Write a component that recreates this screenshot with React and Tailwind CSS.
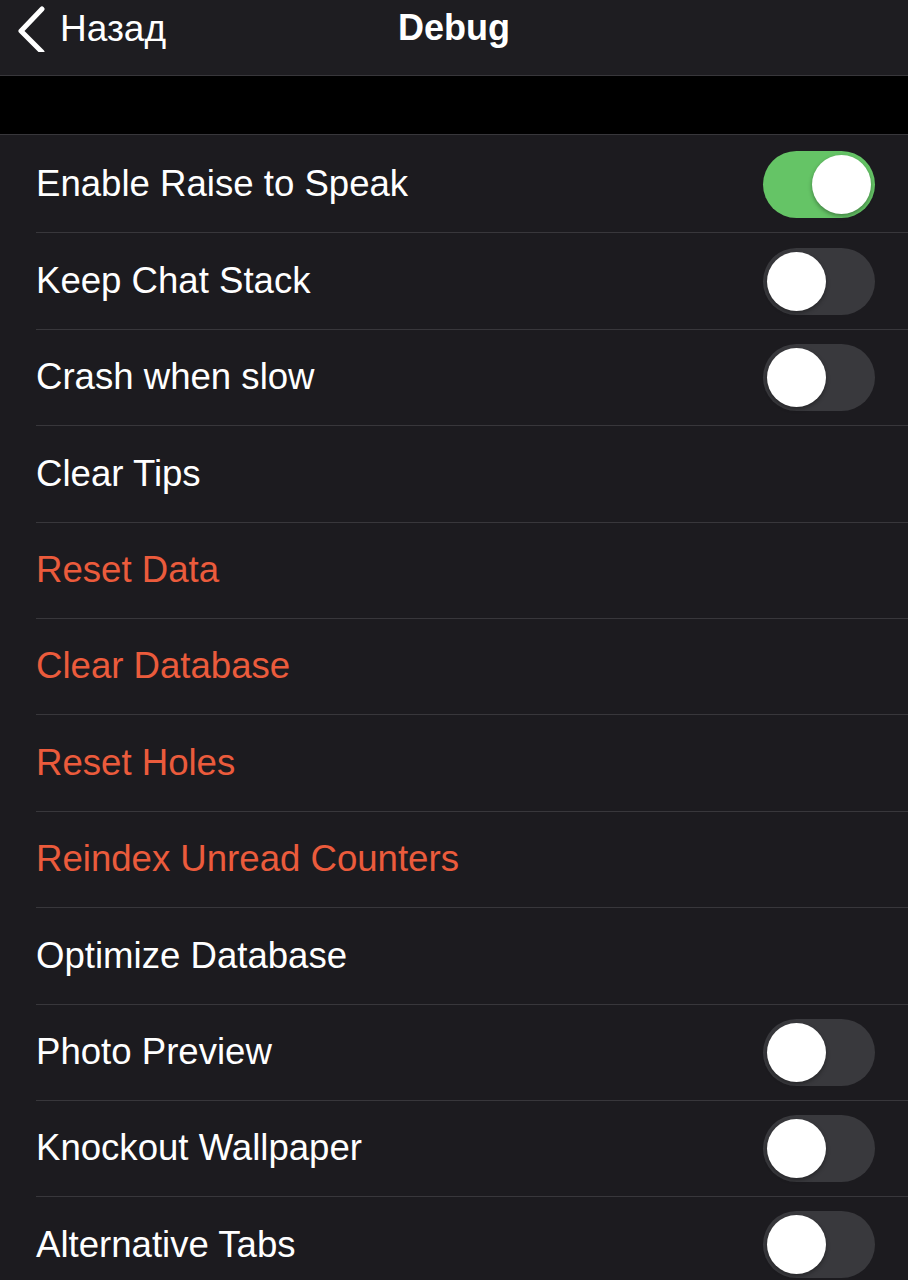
const rows = [
  { label: 'Enable Raise to Speak', toggle: true, on: true },
  { label: 'Keep Chat Stack', toggle: true },
  { label: 'Crash when slow', toggle: true },
  { label: 'Clear Tips' },
  { label: 'Reset Data', danger: true },
  { label: 'Clear Database', danger: true },
  { label: 'Reset Holes', danger: true },
  { label: 'Reindex Unread Counters', danger: true },
  { label: 'Optimize Database' },
  { label: 'Photo Preview', toggle: true },
  { label: 'Knockout Wallpaper', toggle: true },
  { label: 'Alternative Tabs', toggle: true },
]

function Toggle({ on }) {
  return (
    <div
      className={`flex items-center w-[112px] h-[67px] rounded-full p-[4px] ${
        on ? 'bg-[#65c466] justify-end' : 'bg-[#39393d] justify-start'
      }`}
    >
      <div className="w-[59px] h-[59px] rounded-full bg-white shadow-[0_2px_4px_rgba(0,0,0,0.35)]" />
    </div>
  )
}

export default function App() {
  return (
    <div className="min-h-[1280px] bg-[#1c1b1f] font-['Liberation_Sans',Arial,sans-serif] text-white overflow-hidden">
      {/* Nav bar */}
      <div className="relative h-[76px] bg-[#1e1d21] border-b border-[#38373b] flex items-start pt-[6px]">
        <div className="flex items-center pl-[16px] h-[44px]">
          <svg width="32" height="48" viewBox="0 0 32 48" fill="none" className="mr-[12px]">
            <path d="M26 5 L5 27 L26 48" stroke="white" strokeWidth="5" strokeLinecap="round" strokeLinejoin="round" />
          </svg>
          <span className="text-[37px] leading-none">Назад</span>
        </div>
        <div className="absolute left-0 right-0 top-[6px] h-[44px] flex items-center justify-center pointer-events-none">
          <span className="text-[36px] font-bold leading-none">Debug</span>
        </div>
      </div>

      {/* Black spacer */}
      <div className="h-[59px] bg-black border-b border-[#38373b]" />

      {/* List */}
      <div className="bg-[#1c1b1f] pt-[2px]">
        {rows.map((r) => (
          <div key={r.label} className="pl-[36px]">
            <div className="h-[96.4px] flex items-center justify-between pr-[33px] border-b border-[#38373b]">
              <span className={`text-[36.6px] leading-none ${r.danger ? 'text-[#eb5b3c]' : 'text-white'}`}>
                {r.label}
              </span>
              {r.toggle && <Toggle on={r.on} />}
            </div>
          </div>
        ))}
      </div>
    </div>
  )
}
